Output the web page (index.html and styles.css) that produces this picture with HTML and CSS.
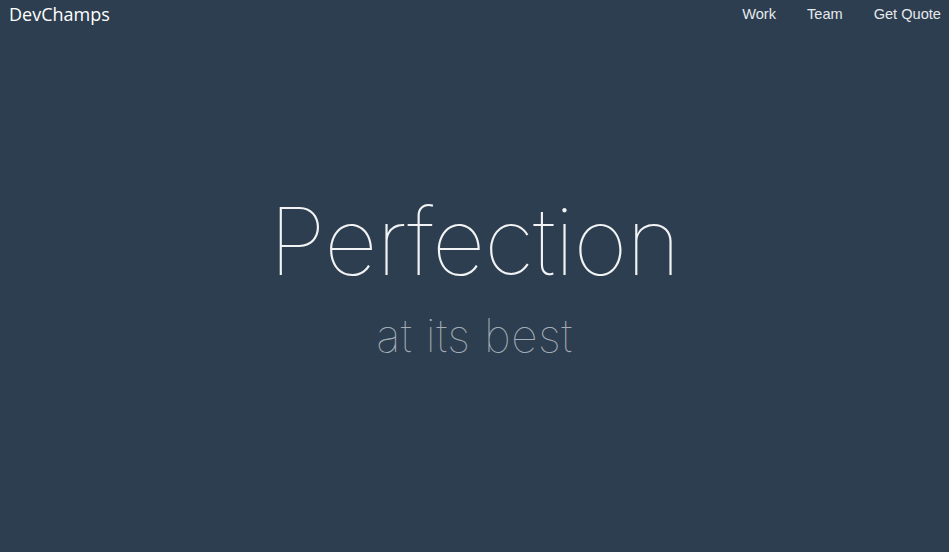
FILE: index.html
```html
<!DOCTYPE html>
<html>
<head>
<meta charset="utf-8">
<link rel="stylesheet" href="styles.css">
</head>
<body>
<header class="nav">
  <a class="brand" href="#">DevChamps</a>
  <nav class="links">
    <a href="#">Work</a>
    <a href="#">Team</a>
    <a href="#">Get Quote</a>
  </nav>
</header>
<main class="hero">
  <h1 class="title">Perfection</h1>
  <p class="subtitle">at its best</p>
</main>
</body>
</html>
```
FILE: styles.css
```css
html, body { margin: 0; padding: 0; height: 100%; }
body {
  background: #2d3e50;
  font-family: "Liberation Sans", Arial, sans-serif;
  display: flex;
  flex-direction: column;
  overflow: hidden;
}
.nav {
  display: flex;
  justify-content: space-between;
  align-items: center;
  height: 27px;
  padding: 0 8px 0 9px;
}
.brand {
  font-family: "Open Sans", sans-serif;
  font-size: 18px;
  color: #ffffff;
  text-decoration: none;
  font-weight: 400;
}
.links { display: flex; gap: 31px; }
.links a {
  color: #e6e9ec;
  text-decoration: none;
  font-size: 14.6px;
}
.hero {
  flex: 1;
  display: flex;
  flex-direction: column;
  align-items: center;
  padding-top: 154px;
}
.title {
  margin: 0;
  font-family: Inter, sans-serif;
  font-weight: 100;
  font-size: 93px;
  line-height: 120px;
  color: #f1f3f4;
  letter-spacing: -1px;
}
.subtitle {
  margin: 4px 0 0;
  font-family: Inter, sans-serif;
  font-weight: 100;
  font-size: 46px;
  line-height: 60px;
  color: #a4adb6;
  letter-spacing: 0.5px;
}
```
